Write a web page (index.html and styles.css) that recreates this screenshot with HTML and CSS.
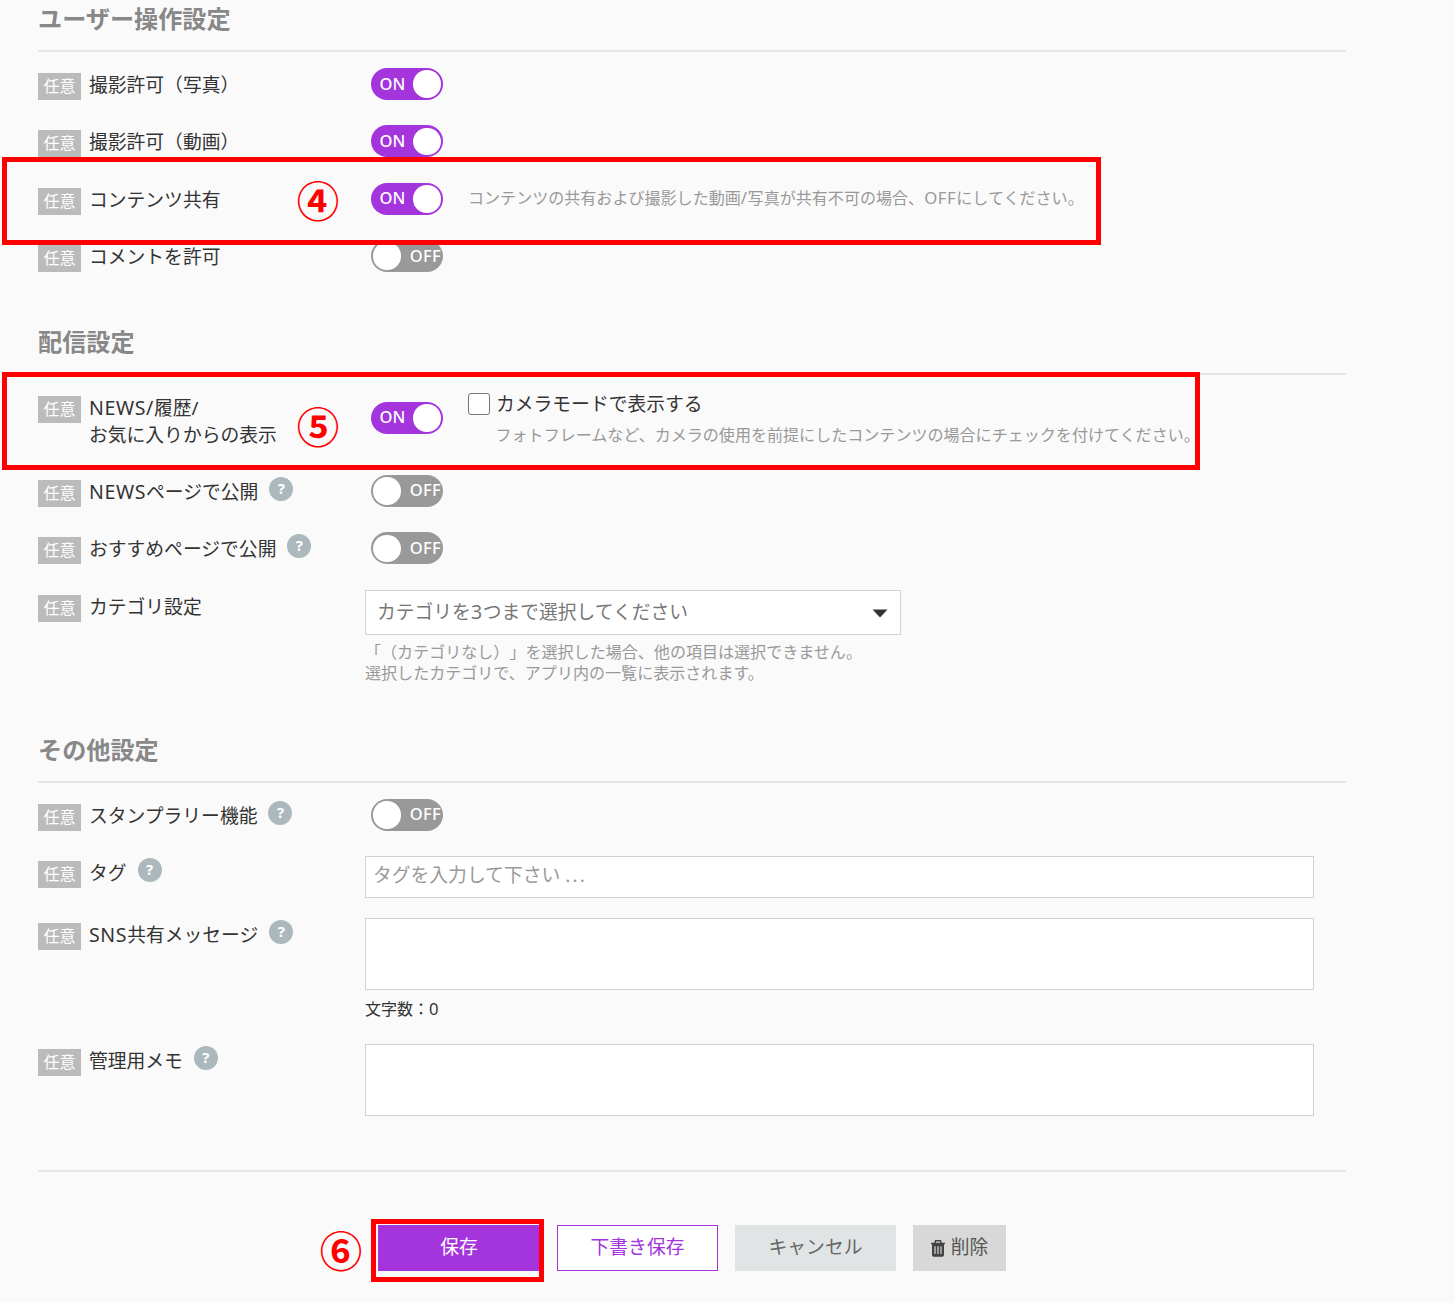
FILE: index.html
```html
<!DOCTYPE html>
<html lang="ja">
<head>
<meta charset="utf-8">
<title>コンテンツ設定</title>
<link rel="stylesheet" href="styles.css">
</head>
<body>
<main class="page">
  <section class="section">
    <h2 class="title">ユーザー操作設定</h2>
    <div class="row"><span class="badge">任意</span><span class="label">撮影許可（写真）</span><div class="control"><span class="toggle on"><span>ON</span><i></i></span></div></div>
    <div class="row"><span class="badge">任意</span><span class="label">撮影許可（動画）</span><div class="control"><span class="toggle on"><span>ON</span><i></i></span></div></div>
    <div class="row"><span class="badge">任意</span><span class="label">コンテンツ共有</span><div class="control"><span class="toggle on"><span>ON</span><i></i></span><span class="hint side">コンテンツの共有および撮影した動画<span class="en">/</span>写真が共有不可の場合、<span class="en">OFF</span>にしてください。</span></div></div>
    <div class="row"><span class="badge">任意</span><span class="label">コメントを許可</span><div class="control"><span class="toggle off"><i></i><span>OFF</span></span></div></div>
  </section>

  <section class="section delivery">
    <h2 class="title">配信設定</h2>
    <div class="row tall"><span class="badge">任意</span><span class="label"><span class="en">NEWS/</span>履歴/<br>お気に入りからの表示</span>
      <div class="control"><span class="toggle on lowered"><span>ON</span><i></i></span>
        <div class="camera"><label class="check"><span class="box"></span>カメラモードで表示する</label><span class="hint">フォトフレームなど、カメラの使用を前提にしたコンテンツの場合にチェックを付けてください。</span></div>
      </div>
    </div>
    <div class="row"><span class="badge">任意</span><span class="label"><span class="en">NEWS</span>ページで公開</span><span class="help">?</span><div class="control"><span class="toggle off"><i></i><span>OFF</span></span></div></div>
    <div class="row"><span class="badge">任意</span><span class="label">おすすめページで公開</span><span class="help">?</span><div class="control"><span class="toggle off"><i></i><span>OFF</span></span></div></div>
    <div class="row category"><span class="badge">任意</span><span class="label">カテゴリ設定</span>
      <div class="control stack">
        <div class="select"><span>カテゴリを<span class="en">3</span>つまで選択してください</span><svg width="16" height="9" viewBox="0 0 16 9"><path d="M.5 0.5h15L8 8.5z" fill="#333"/></svg></div>
        <p class="hint">「（カテゴリなし）」を選択した場合、他の項目は選択できません。<br>選択したカテゴリで、アプリ内の一覧に表示されます。</p>
      </div>
    </div>
  </section>

  <section class="section">
    <h2 class="title">その他設定</h2>
    <div class="row"><span class="badge">任意</span><span class="label">スタンプラリー機能</span><span class="help">?</span><div class="control"><span class="toggle off"><i></i><span>OFF</span></span></div></div>
    <div class="row tag"><span class="badge">任意</span><span class="label">タグ</span><span class="help">?</span><div class="control stack"><div class="input">タグを入力して下さい <span class="dots">...</span></div></div></div>
    <div class="row area"><span class="badge">任意</span><span class="label"><span class="en">SNS</span>共有メッセージ</span><span class="help">?</span><div class="control stack"><div class="textarea"></div><p class="count">文字数：<span class="en">0</span></p></div></div>
    <div class="row area"><span class="badge">任意</span><span class="label">管理用メモ</span><span class="help">?</span><div class="control stack"><div class="textarea"></div></div></div>
  </section>

  <footer class="actions">
    <span class="btn save">保存</span>
    <span class="btn draft">下書き保存</span>
    <span class="btn cancel">キャンセル</span>
    <span class="btn delete"><svg width="14" height="17" viewBox="0 0 14 17"><path d="M4.2 3V1.5q0-.8.8-.8h4q.8 0 .8.8V3M0 3.4h14" fill="none" stroke="#444" stroke-width="1.5"/><path d="M1 4h12v11q0 1.7-1.7 1.7H2.7Q1 16.7 1 15z" fill="#444"/><path d="M4 6.2v7.8M7 6.2v7.8M10 6.2v7.8" stroke="#d8d8d8" stroke-width="1.2"/></svg>削除</span>
  </footer>

  <div class="mark mark-share"></div>
  <div class="mark mark-news"></div>
  <div class="mark mark-save"></div>
  <span class="num num-4">④</span>
  <span class="num num-5">⑤</span>
  <span class="num num-6">⑥</span>
</main>
</body>
</html>
```
FILE: styles.css
```css
* { box-sizing: border-box; }
body {
  margin: 0;
  background: #fafafa;
  color: #333;
  font-family: "Noto Sans", "Noto Sans CJK JP", sans-serif;
  font-size: 18.8px;
  text-spacing-trim: space-all;
}
p { margin: 0; }
.page {
  position: relative;
  width: 1455px;
  height: 1303px;
  overflow: hidden;
  padding-left: 38px;
}
.section { width: 1308px; }
.delivery { margin-top: 25.4px; }
.title {
  height: 52px;
  margin: 0 0 16px;
  border-bottom: 2px solid #e6e6e6;
  font-size: 24.15px;
  line-height: 38px;
  font-weight: 700;
  color: #888;
}
.row {
  display: flex;
  align-items: flex-start;
  height: 57.4px;
}
.row.tall { height: 84px; }
.row.category { height: 141.2px; }
.row.tag { height: 61.6px; }
.row.area { height: 126px; }
.badge {
  width: 43px;
  height: 27px;
  margin: 5px 8px 0 0;
  background: #bbb;
  color: #fff;
  font-size: 16px;
  line-height: 26px;
  text-align: center;
  flex: none;
}
.label {
  margin-top: 4px;
  line-height: 27px;
  white-space: nowrap;
}
.en { font-size: 1.04em; letter-spacing: .6px; line-height: 1; }
.dots { letter-spacing: 2.3px; }
.help {
  width: 24px;
  height: 24px;
  margin: 2px 0 0 11px;
  border-radius: 50%;
  background: #abb8bc;
  color: #fff;
  font-size: 15px;
  font-weight: 700;
  line-height: 23px;
  text-align: center;
}
.control {
  display: flex;
  width: 981px;
  margin-left: auto;
  align-items: flex-start;
  flex: none;
}
.stack { flex-direction: column; }
.toggle {
  display: flex;
  align-items: center;
  justify-content: space-between;
  width: 72.5px;
  height: 32px;
  margin-left: 5.5px;
  border-radius: 16px;
  color: #fff;
  font-size: 16.5px;
  font-weight: 500;
  line-height: 30px;
  flex: none;
}
.toggle span { margin-top: -1px; }
.toggle i {
  width: 27.5px;
  height: 27.5px;
  border-radius: 50%;
  background: #fff;
}
.on { background: #a435dc; padding: 0 2.5px 0 9px; }
.off { background: #999; padding: 0 2px 0 2.5px; letter-spacing: .3px; }
.lowered { margin-top: 11px; }
.hint {
  color: #999;
  font-size: 16.06px;
  line-height: 21.5px;
  white-space: nowrap;
}
.side { margin: 5px 0 0 25px; }
.camera {
  display: flex;
  flex-direction: column;
  margin-left: 25px;
}
.check {
  display: flex;
  align-items: center;
  gap: 6px;
  height: 25px;
  margin-top: 1px;
  line-height: 25px;
}
.box {
  width: 22px;
  height: 22px;
  border: 1.5px solid #767676;
  border-radius: 3px;
  background: #fff;
}
.camera .hint { margin: 8px 0 0 27.5px; }
.select {
  display: flex;
  align-items: center;
  justify-content: space-between;
  width: 536px;
  height: 45px;
  padding: 0 12px 0 11px;
  border: 1.5px solid #d2d2d2;
  background: #fff;
  color: #777;
  line-height: 43px;
}
.select svg { margin-top: 2px; }
.select + .hint { margin-top: 7px; }
.input {
  width: 949px;
  height: 41.5px;
  padding-left: 7px;
  border: 1.5px solid #d2d2d2;
  background: #fff;
  color: #999;
  line-height: 36px;
}
.textarea {
  width: 949px;
  height: 72.5px;
  border: 1.5px solid #d2d2d2;
  background: #fff;
}
.count {
  margin-top: 7.5px;
  font-size: 16px;
  line-height: 22px;
}
.actions {
  display: flex;
  width: 1308px;
  padding: 53.4px 0 0 340px;
  border-top: 2px solid #e6e6e6;
}
.btn {
  display: flex;
  align-items: center;
  justify-content: center;
  width: 161px;
  height: 46px;
  margin-right: 17px;
  padding-bottom: 4px;
}
.save { width: 162px; background: #a435dc; color: #fff; }
.draft { border: 1.5px solid #a435dc; background: #fff; color: #a435dc; }
.cancel { background: #e0e4e4; color: #666; }
.delete { width: 93px; gap: 6px; background: #d8d8d8; color: #555; }
.delete svg { margin-top: 4px; }
.mark { position: absolute; border: 5px solid #f00; }
.mark-share { left: 2px; top: 157px; width: 1099px; height: 88px; }
.mark-news { left: 2px; top: 372px; width: 1198px; height: 98px; }
.mark-save { left: 371px; top: 1219px; width: 173px; height: 63px; }
.num {
  position: absolute;
  width: 44px;
  height: 44px;
  color: #f00;
  font-family: "Noto Sans CJK JP", sans-serif;
  font-size: 42.5px;
  font-weight: 700;
  line-height: 44px;
  text-align: center;
}
.num-4 { left: 296px; top: 177px; }
.num-5 { left: 296px; top: 403px; }
.num-6 { left: 319px; top: 1227px; }
```
